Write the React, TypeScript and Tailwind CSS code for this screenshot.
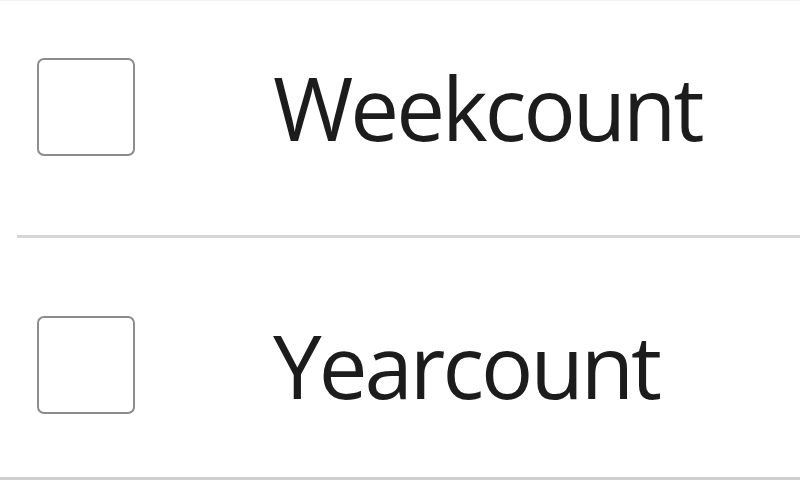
const rows = ["Weekcount", "Yearcount"];

function Checkbox() {
  return (
    <span className="block h-[98px] w-[98px] shrink-0 rounded-[7px] border-[2.5px] border-[#8c8c8c] bg-white" />
  );
}

export default function App() {
  return (
    <div
      className="h-[480px] w-[800px] overflow-hidden border-t border-t-[#f2f2f2] border-b-[3px] border-b-[#cfcfcf] bg-white text-[#1c1c1c]"
      style={{ fontFamily: '"Open Sans", "Noto Sans", sans-serif' }}
    >
      {rows.map((label, i) => (
        <div key={label}>
          <div
            className={
              i === 0
                ? "flex items-center pl-[37px] pt-[57px] pb-[79px]"
                : "flex items-center pl-[37px] pt-[78px]"
            }
          >
            <Checkbox />
            <span className="ml-[138px] text-[87px] leading-none tracking-[-3px]">{label}</span>
          </div>
          {i === 0 && <div className="ml-[17px] h-[3px] bg-[#d6d6d6]" />}
        </div>
      ))}
    </div>
  );
}
